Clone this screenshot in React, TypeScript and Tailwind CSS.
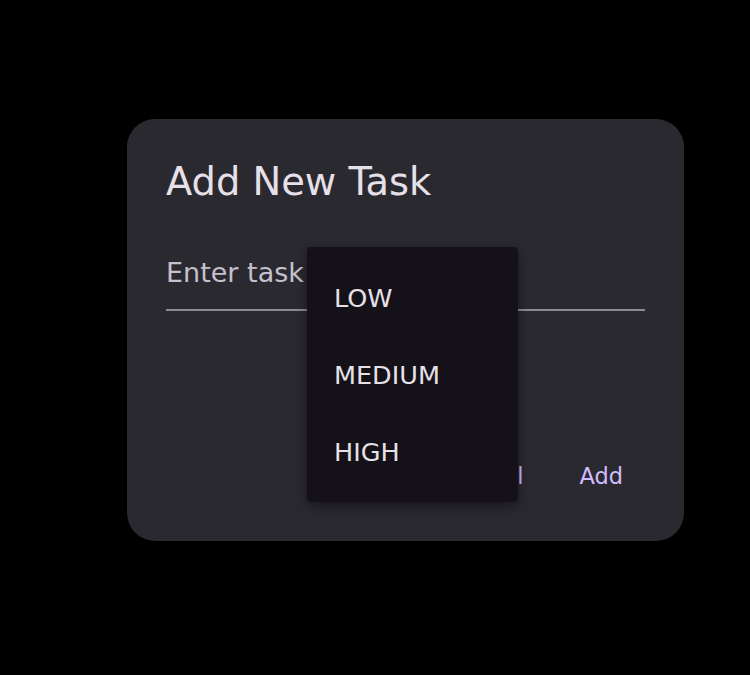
export default function App() {
  const font = { fontFamily: '"DejaVu Sans", sans-serif' };
  return (
    <div className="w-[750px] h-[675px] bg-black overflow-hidden" style={font}>
      <div className="relative ml-[127px] mt-[119px] w-[557px] h-[422px] rounded-[28px] bg-[#2b2930] px-[39px] pt-[44px] flex flex-col">
        <div className="text-[38.4px] leading-[38px] text-[#e6e0e9]">Add New Task</div>
        <div className="mt-[58px] text-[27px] leading-[27px] text-[#c5c0cc] pb-[23px] border-b-2 border-[#8e8a94]">
          Enter task
        </div>
        <div className="mt-[154px] flex justify-end gap-[10px]">
          <div className="px-[23px] text-[22.5px] leading-[22px] text-[#d0bcff]">Cancel</div>
          <div className="pl-[23px] pr-[22px] text-[22.5px] leading-[22px] text-[#d0bcff]">Add</div>
        </div>
        <div className="absolute left-[180px] top-[128px] w-[211px] h-[255px] rounded-[4px] bg-[#141218] pt-[13px] pb-[11px] shadow-[0_4px_12px_rgba(0,0,0,0.45)]">
          {["LOW", "MEDIUM", "HIGH"].map((t) => (
            <div key={t} className="h-[77px] flex items-center pl-[27px] text-[25.5px] leading-[25px] text-[#e6e0e9]">
              {t}
            </div>
          ))}
        </div>
      </div>
    </div>
  );
}
